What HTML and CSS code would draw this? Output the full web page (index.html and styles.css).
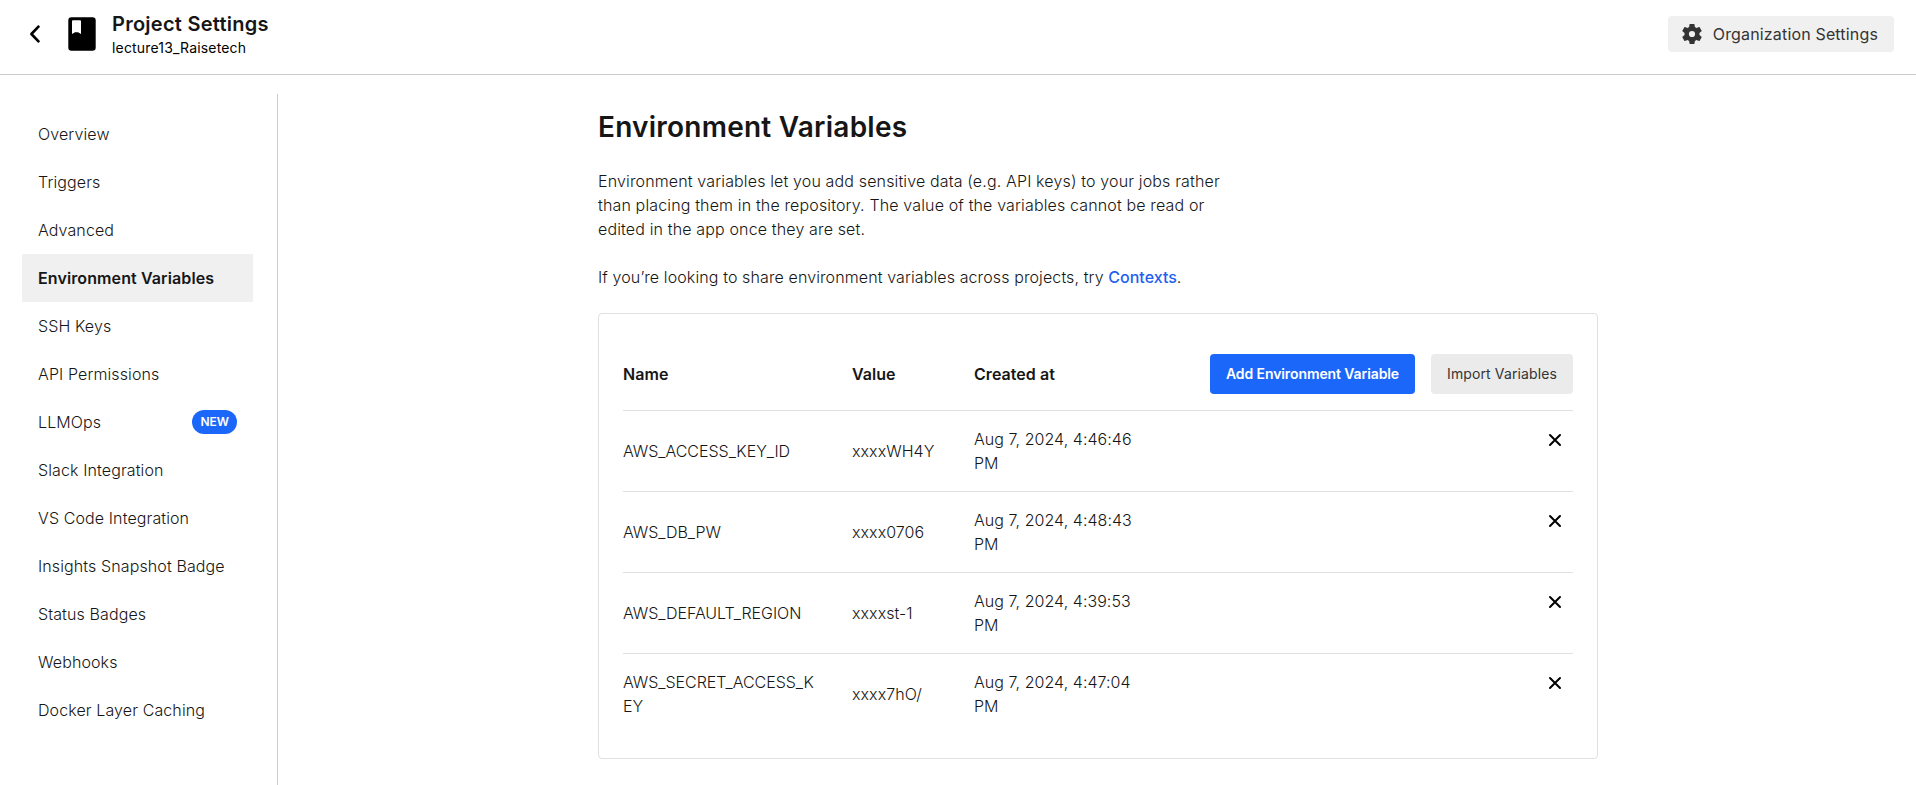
FILE: index.html
```html
<!DOCTYPE html>
<html lang="en">
<head>
<meta charset="utf-8">
<title>Project Settings</title>
<link rel="stylesheet" href="styles.css">
</head>
<body>
<header class="header">
  <svg class="back" viewBox="0 0 12 20" fill="none" stroke="#000" stroke-width="2.6"><path d="M10.200 1.800 2.400 10l7.800 8.200" stroke-linejoin="round"/></svg>
  <svg class="book" viewBox="0 0 28 34"><rect x=".3" y=".2" width="27.4" height="33.6" rx="3.2"/><path fill="#fff" d="M5 3.300h7a1 1 0 0 1 1 1V17l-3-1.700H7L4 17V4.300a1 1 0 0 1 1-1z"/></svg>
  <div class="heading">
    <h1 class="heading-title">Project Settings</h1>
    <div class="heading-project">lecture13_Raisetech</div>
  </div>
  <a class="org"><svg class="gear" viewBox="2 2 20 20"><path fill="#343434" d="M19.430 12.980c.04-.32.070-.64.070-.98s-.03-.66-.07-.98l2.110-1.650c.19-.15.24-.42.12-.64l-2-3.460c-.12-.22-.39-.3-.61-.22l-2.490 1c-.52-.4-1.080-.73-1.690-.98l-.38-2.650C14.460 2.180 14.250 2 14 2h-4c-.25 0-.46.18-.49.42l-.38 2.650c-.61.25-1.170.59-1.690.98l-2.490-1c-.23-.09-.49 0-.61.22l-2 3.460c-.13.22-.07.49.12.64l2.110 1.650c-.04.32-.07.65-.07.98s.03.66.07.98l-2.110 1.650c-.19.15-.24.42-.12.64l2 3.460c.12.22.39.3.61.22l2.490-1c.52.4 1.080.73 1.690.98l.38 2.650c.03.24.24.42.49.42h4c.25 0 .46-.18.49-.42l.38-2.650c.61-.25 1.170-.59 1.690-.98l2.490 1c.23.09.49 0 .61-.22l2-3.460c.12-.22.07-.49-.12-.64zM12 15.100a3.100 3.100 0 1 1 0-6.200 3.100 3.100 0 0 1 0 6.200z"/></svg><span>Organization Settings</span></a>
</header>
<div class="layout">
  <nav class="nav">
    <a class="nav-item">Overview</a>
    <a class="nav-item">Triggers</a>
    <a class="nav-item">Advanced</a>
    <a class="nav-item active">Environment Variables</a>
    <a class="nav-item">SSH Keys</a>
    <a class="nav-item">API Permissions</a>
    <a class="nav-item">LLMOps<span class="badge">NEW</span></a>
    <a class="nav-item">Slack Integration</a>
    <a class="nav-item">VS Code Integration</a>
    <a class="nav-item">Insights Snapshot Badge</a>
    <a class="nav-item">Status Badges</a>
    <a class="nav-item">Webhooks</a>
    <a class="nav-item">Docker Layer Caching</a>
  </nav>
  <main class="main">
    <h2 class="title">Environment Variables</h2>
    <p class="text">Environment variables let you add sensitive data (e.g. API keys) to your jobs rather<br>than placing them in the repository. The value of the variables cannot be read or<br>edited in the app once they are set.</p>
    <p class="text hint">If you’re looking to share environment variables across projects, try <a class="link">Contexts</a>.</p>
    <section class="card">
      <div class="row head">
        <div>Name</div><div>Value</div><div>Created at</div>
        <div class="actions"><button class="btn primary">Add Environment Variable</button><button class="btn">Import Variables</button></div>
      </div>
      <div class="row">
        <div class="name">AWS_ACCESS_KEY_ID</div><div>xxxxWH4Y</div><div>Aug 7, 2024, 4:46:46<br>PM</div>
        <svg class="remove" viewBox="0 0 14 14"><path d="m2 2 10 10m0-10L2 12"/></svg>
      </div>
      <div class="row">
        <div class="name">AWS_DB_PW</div><div>xxxx0706</div><div>Aug 7, 2024, 4:48:43<br>PM</div>
        <svg class="remove" viewBox="0 0 14 14"><path d="m2 2 10 10m0-10L2 12"/></svg>
      </div>
      <div class="row">
        <div class="name">AWS_DEFAULT_REGION</div><div>xxxxst-1</div><div>Aug 7, 2024, 4:39:53<br>PM</div>
        <svg class="remove" viewBox="0 0 14 14"><path d="m2 2 10 10m0-10L2 12"/></svg>
      </div>
      <div class="row">
        <div class="name">AWS_SECRET_ACCESS_KEY</div><div>xxxx7hO/</div><div>Aug 7, 2024, 4:47:04<br>PM</div>
        <svg class="remove" viewBox="0 0 14 14"><path d="m2 2 10 10m0-10L2 12"/></svg>
      </div>
    </section>
  </main>
</div>
</body>
</html>
```
FILE: styles.css
```css
* { box-sizing: border-box; }
body {
  margin: 0;
  height: 785px;
  overflow: hidden;
  display: flex;
  flex-direction: column;
  background: #fff;
  color: #161616;
  font: 300 16px/24px Inter, sans-serif;
}
h1, h2, p { margin: 0; }
.header {
  display: flex;
  align-items: center;
  flex: none;
  height: 75px;
  padding: 0 22px 7px 29px;
  border-bottom: 1px solid #ccc;
}
.back { width: 12px; height: 20px; }
.book { width: 28px; height: 34px; margin-left: 27px; }
.heading { margin: 4px auto 0 16px; }
.heading-title { font-size: 20px; line-height: 24px; font-weight: 600; letter-spacing: .26px; }
.heading-project { font-size: 14px; line-height: 24px; font-weight: 400; letter-spacing: .17px; color: #000; }
.org {
  display: flex;
  align-items: center;
  gap: 11px;
  height: 36px;
  padding: 0 16px 0 14px;
  border-radius: 4px;
  background: #f0f0f0;
  color: #343434;
  font-weight: 400;
  letter-spacing: .16px;
}
.gear { width: 20px; height: 20px; }
.layout { flex: 1; display: flex; padding-top: 19px; }
.nav {
  flex: none;
  width: 278px;
  padding: 16px 24px 0 22px;
  border-right: 1px solid #ccc;
  letter-spacing: .11px;
}
.nav-item {
  display: flex;
  align-items: center;
  justify-content: space-between;
  height: 48px;
  padding: 0 16px;
}
.nav-item.active { background: #f0f0f0; font-weight: 600; }
.badge {
  padding: 0 8px;
  border-radius: 12px;
  background: #1b67fa;
  color: #fff;
  font-size: 12px;
  font-weight: 600;
  letter-spacing: 0;
}
.main { width: 1000px; margin-left: 320px; }
.title { margin: 17px 0 25px; font-size: 28px; line-height: 33px; font-weight: 600; letter-spacing: .24px; }
.text { margin-bottom: 24px; letter-spacing: .145px; }
.hint { letter-spacing: .11px; }
.link { color: #1f5ff0; font-weight: 500; letter-spacing: 0; }
.card {
  padding: 24px;
  border: 1px solid #e0e0e0;
  border-radius: 4px;
}
.row {
  display: grid;
  grid-template-columns: 197px 90px 170px 1fr;
  column-gap: 32px;
  align-items: center;
  padding: 16px 0;
  border-bottom: 1px solid #e0e0e0;
  letter-spacing: .05px;
}
.row:last-child { border-bottom: 0; }
.head { font-weight: 600; }
.name { overflow-wrap: anywhere; letter-spacing: -.03px; }
.actions { display: flex; justify-content: flex-end; gap: 16px; }
.btn {
  height: 40px;
  padding: 0 16px;
  border: 0;
  border-radius: 4px;
  background: #ebebeb;
  color: #343434;
  font: 400 14px/24px Inter, sans-serif;
  letter-spacing: .12px;
  white-space: nowrap;
}
.btn.primary { background: #1b67fa; color: #fff; font-weight: 600; letter-spacing: -.1px; }
.remove {
  justify-self: end;
  align-self: start;
  width: 14px;
  height: 14px;
  margin: 6px 11px 0 0;
  stroke: #000;
  stroke-width: 2;
  stroke-linecap: round;
}
```
